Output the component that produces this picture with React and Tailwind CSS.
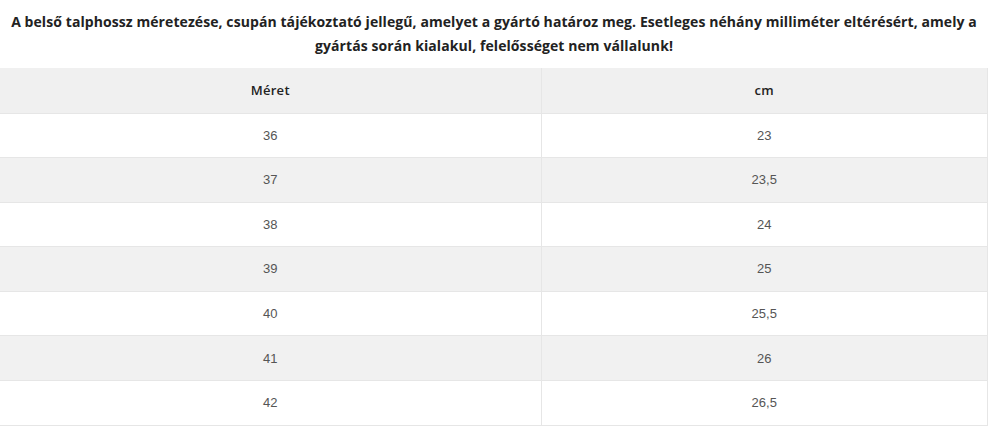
import React from 'react';

const rows = [
  ['36', '23'],
  ['37', '23,5'],
  ['38', '24'],
  ['39', '25'],
  ['40', '25,5'],
  ['41', '26'],
  ['42', '26,5'],
];

function App() {
  return (
    <div className="w-[1000px] h-[428px] bg-white overflow-hidden">
      <p className="w-[988px] pt-[10px] pb-[10px] text-center text-[14px] leading-[24px] font-bold tracking-[0.08px] text-[#222]" style={{ fontFamily: '"Open Sans", sans-serif' }}>
        A belső talphossz méretezése, csupán tájékoztató jellegű, amelyet a gyártó határoz meg. Esetleges néhány milliméter eltérésért, amely a gyártás során kialakul, felelősséget nem vállalunk!
      </p>
      <table className="w-[988px] border-collapse table-fixed">
        <colgroup>
          <col className="w-[541px]" />
          <col />
        </colgroup>
        <thead>
          <tr className="bg-[#f0f0f0] h-[45px]">
            <th className="text-[13px] font-semibold tracking-[0.3px] text-[#222] border-r border-[#e6e6e6] border-b" style={{ fontFamily: '"Open Sans", sans-serif' }}>Méret</th>
            <th className="text-[13px] font-semibold tracking-[0.3px] text-[#222] border-r border-[#e6e6e6] border-b" style={{ fontFamily: '"Open Sans", sans-serif' }}>cm</th>
          </tr>
        </thead>
        <tbody className="font-['Liberation_Sans',sans-serif] text-[13px] text-[#555]">
          {rows.map(([size, cm], i) => (
            <tr key={size} className={`h-[44.6px] ${i % 2 === 1 ? 'bg-[#f1f1f1]' : 'bg-white'}`}>
              <td className="text-center border-b border-r border-[#e6e6e6]">{size}</td>
              <td className="text-center border-b border-r border-[#e6e6e6]">{cm}</td>
            </tr>
          ))}
        </tbody>
      </table>
    </div>
  );
}

export default App;
